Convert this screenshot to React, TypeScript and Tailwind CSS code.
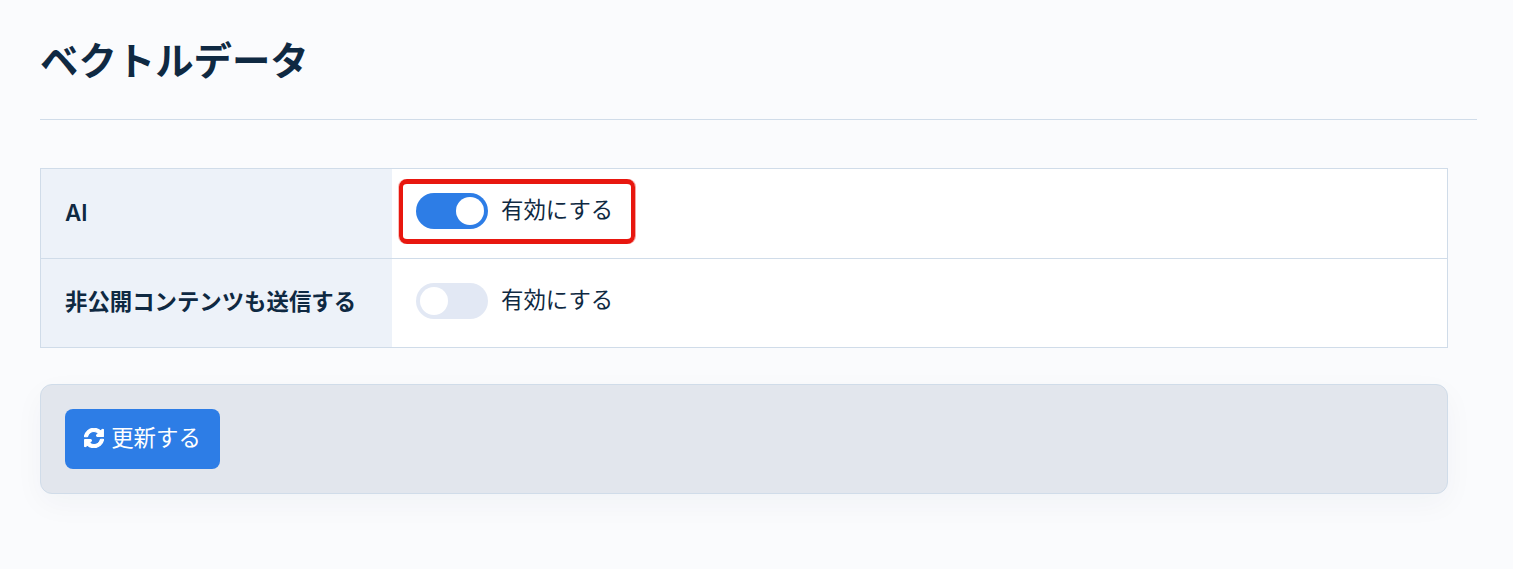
import { FaSyncAlt } from 'react-icons/fa';

const fontClassName = "font-['Inter','Noto_Sans_CJK_JP',sans-serif]";

interface ToggleRowProps {
  label: string;
  enabled: boolean;
  highlighted?: boolean;
  last?: boolean;
}

function ToggleRow({ label, enabled, highlighted, last }: ToggleRowProps) {
  return (
    <div className={`flex ${last ? 'h-[88px]' : 'h-[90px] border-b border-[#d0dce9]'}`}>
      <div className="flex w-[351px] items-center bg-[#edf2f9] pb-0.5 pl-6 text-[22.4px] font-semibold text-[#0f2942]">
        {label}
      </div>
      <div className="relative flex flex-1 items-start bg-white pl-6 pt-6">
        <span
          className={`flex h-9 w-[72px] items-center rounded-full ${
            enabled ? 'justify-end bg-[#2d7de6]' : 'justify-start bg-[#e2e8f4]'
          } p-1`}
        >
          <span className="h-7 w-7 rounded-full bg-white" />
        </span>
        <span className="ml-[13px] text-[22.4px] leading-[34px] text-[#0f2942]">有効にする</span>
        {highlighted && (
          <span className="absolute left-[7px] top-[10px] h-[65px] w-[236px] rounded-lg border-x-4 border-y-[5px] border-[#e8170f] shadow-[-1px_0_0_#f9c0bc,1px_0_0_#f6a5a1]" />
        )}
      </div>
    </div>
  );
}

export default function App() {
  return (
    <div className={`min-h-[569px] bg-[#fafbfd] pl-10 pr-9 pt-[34px] ${fontClassName}`}>
      <div className="h-[86px] border-b border-[#d0dce9]">
        <h1 className="text-[38.4px] leading-[54px] font-bold text-[#0f2942]">ベクトルデータ</h1>
      </div>

      <div className="mt-12 w-[1408px]">
        <div className="border border-[#d0dce9]">
          <ToggleRow label="AI" enabled highlighted />
          <ToggleRow label="非公開コンテンツも送信する" enabled={false} last />
        </div>

        <div className="mt-9 rounded-xl border border-[#d0dce9] bg-[#e2e6ed] p-6 shadow-[0_10px_30px_rgba(15,41,66,0.04)]">
          <button
            type="button"
            className="flex h-[60px] w-[155px] items-center justify-center gap-[7px] rounded-lg bg-[#2d7de6] pb-0.5 text-[22.4px] text-white"
          >
            <FaSyncAlt className="h-5 w-5" stroke="currentColor" strokeWidth={28} />
            更新する
          </button>
        </div>
      </div>
    </div>
  );
}
